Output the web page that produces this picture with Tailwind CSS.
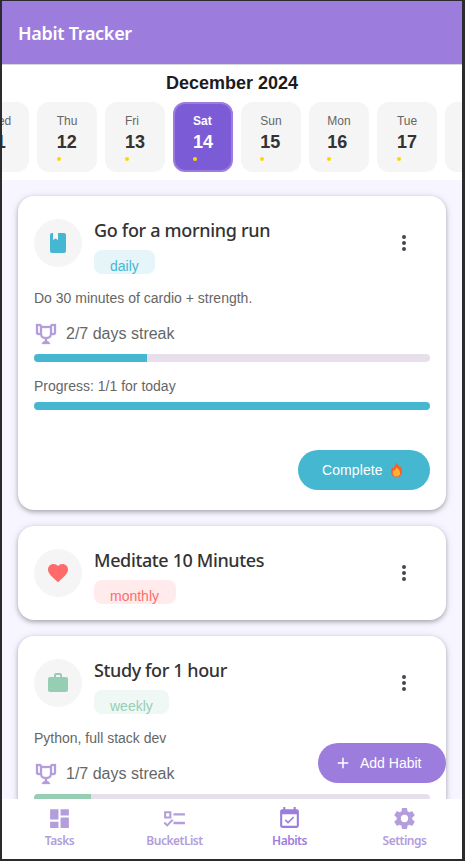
<!DOCTYPE html>
<html lang="en">
<head>
<meta charset="utf-8">
<title>Habit Tracker</title>
<script src="https://cdn.jsdelivr.net/npm/@tailwindcss/browser@4"></script>
</head>
<body class="h-[861px] w-[465px] overflow-hidden bg-[#2b2b2d] pt-px pr-[3px] pb-[2px] pl-[2px] font-['Liberation_Sans',Arial,sans-serif]">
<div class="relative flex h-[858px] w-[460px] flex-col overflow-hidden bg-[#f7f5ff]">
  <header class="flex h-16 shrink-0 items-center border-b border-[#d8d8d8] bg-[#9c7ddd] pt-0.5 pl-4">
    <h1 class="font-['Noto_Sans','Open_Sans',sans-serif] text-[18px] font-semibold tracking-[-0.3px] text-white">Habit Tracker</h1>
  </header>

  <section class="h-[115px] shrink-0 overflow-hidden bg-white">
    <h2 class="mt-[7px] h-[22px] text-center text-[18px] leading-[22px] font-bold text-[#1c1b1f]">December 2024</h2>
    <div class="-ml-[33px] mt-2 flex w-max gap-2">
      <div class="flex h-[70px] w-[60px] justify-center rounded-[12px] bg-[#f5f5f5]"><div class="pt-[11px]"><div class="text-[12px] leading-4 text-[#666]">Wed</div><div class="mt-[3px] text-[18px] leading-5 font-bold text-[#333]">11</div><div class="mt-[5px] size-1 rounded-full bg-[#ffd700]"></div></div></div>
      <div class="flex h-[70px] w-[60px] justify-center rounded-[12px] bg-[#f5f5f5]"><div class="pt-[11px]"><div class="text-[12px] leading-4 text-[#666]">Thu</div><div class="mt-[3px] text-[18px] leading-5 font-bold text-[#333]">12</div><div class="mt-[5px] size-1 rounded-full bg-[#ffd700]"></div></div></div>
      <div class="flex h-[70px] w-[60px] justify-center rounded-[12px] bg-[#f5f5f5]"><div class="pt-[11px]"><div class="text-[12px] leading-4 text-[#666]">Fri</div><div class="mt-[3px] text-[18px] leading-5 font-bold text-[#333]">13</div><div class="mt-[5px] size-1 rounded-full bg-[#ffd700]"></div></div></div>
      <div class="flex h-[70px] w-[60px] justify-center rounded-[12px] border-2 border-[#9c7ddd] bg-[#7b5cd6]"><div class="pt-[9px]"><div class="text-[12px] leading-4 font-bold text-white">Sat</div><div class="mt-[3px] text-[18px] leading-5 font-bold text-white">14</div><div class="mt-[5px] size-1 rounded-full bg-[#ffd700]"></div></div></div>
      <div class="flex h-[70px] w-[60px] justify-center rounded-[12px] bg-[#f5f5f5]"><div class="pt-[11px]"><div class="text-[12px] leading-4 text-[#666]">Sun</div><div class="mt-[3px] text-[18px] leading-5 font-bold text-[#333]">15</div><div class="mt-[5px] size-1 rounded-full bg-[#ffd700]"></div></div></div>
      <div class="flex h-[70px] w-[60px] justify-center rounded-[12px] bg-[#f5f5f5]"><div class="pt-[11px]"><div class="text-[12px] leading-4 text-[#666]">Mon</div><div class="mt-[3px] text-[18px] leading-5 font-bold text-[#333]">16</div><div class="mt-[5px] size-1 rounded-full bg-[#ffd700]"></div></div></div>
      <div class="flex h-[70px] w-[60px] justify-center rounded-[12px] bg-[#f5f5f5]"><div class="pt-[11px]"><div class="text-[12px] leading-4 text-[#666]">Tue</div><div class="mt-[3px] text-[18px] leading-5 font-bold text-[#333]">17</div><div class="mt-[5px] size-1 rounded-full bg-[#ffd700]"></div></div></div>
      <div class="h-[70px] w-[60px] rounded-[12px] bg-[#f5f5f5]"></div>
    </div>
  </section>

  <main class="flex min-h-0 flex-1 flex-col gap-4 overflow-hidden px-4 pt-4">
    <article class="h-[314px] shrink-0 rounded-[16px] bg-white px-4 pt-[22px] shadow-[0_2px_4px_rgba(0,0,0,0.25),0_1px_8px_rgba(0,0,0,0.12)]">
      <div class="flex h-[56px]">
        <div class="mt-px flex size-12 items-center justify-center rounded-full bg-[#f5f5f5]"><svg class="size-6" viewBox="0 0 24 24" fill="#45b7d1"><path d="M18,22A2,2 0 0,0 20,20V4C20,2.89 19.1,2 18,2H12V9L9.5,7.5L7,9V2H6A2,2 0 0,0 4,4V20A2,2 0 0,0 6,22H18Z"/></svg></div>
        <div class="ml-3 flex-1">
          <h3 class="h-6 font-['Noto_Sans','Open_Sans',sans-serif] text-[18px] leading-6 font-medium tracking-[-0.32px] text-[#333]">Go for a morning run</h3>
          <div class="mt-2 inline-block h-6 overflow-hidden rounded-[8px] bg-[#e6f5f9] px-4 pt-1.5 text-[14px] leading-5 text-[#45b7d1]">daily</div>
        </div>
        <svg class="mt-[13px] mr-[14px] size-6" viewBox="0 0 24 24" fill="#49454f"><path d="M12,16A2,2 0 0,1 14,18A2,2 0 0,1 12,20A2,2 0 0,1 10,18A2,2 0 0,1 12,16M12,10A2,2 0 0,1 14,12A2,2 0 0,1 12,14A2,2 0 0,1 10,12A2,2 0 0,1 12,10M12,4A2,2 0 0,1 14,6A2,2 0 0,1 12,8A2,2 0 0,1 10,6A2,2 0 0,1 12,4Z"/></svg>
      </div>
      <p class="mt-[14px] text-[14px] leading-5 text-[#666]">Do 30 minutes of cardio + strength.</p>
      <div class="mt-[14px] flex h-6 items-center gap-2 text-[16px] leading-6 text-[#666]"><svg class="size-6" viewBox="0 0 24 24" fill="#b39ddb" stroke="#b39ddb" stroke-width="0.3"><path d="M18 2C17.1 2 16 3 16 4H8C8 3 6.9 2 6 2H2V11C2 12 3 13 4 13H6.2C6.6 15 7.9 16.7 11 17V19.08C8 19.54 8 22 8 22H16C16 22 16 19.54 13 19.08V17C16.1 16.7 17.4 15 17.8 13H20C21 13 22 12 22 11V2H18M6 11H4V4H6V11M16 11.5C16 13.43 15.42 15 12 15C8.59 15 8 13.43 8 11.5V6H16V11.5M20 11H18V4H20V11Z"/></svg><span>2/7 days streak</span></div>
      <div class="mt-2 h-2 overflow-hidden rounded-full bg-[#e7e0ec]"><div class="h-2 w-[113px] bg-[#45b7d1]"></div></div>
      <p class="mt-[14px] text-[14px] leading-5 text-[#666]">Progress: 1/1 for today</p>
      <div class="mt-[6px] h-2 rounded-full bg-[#45b7d1]"></div>
      <div class="mt-10 flex justify-end"><button class="flex h-10 w-[132px] items-center rounded-full bg-[#45b7d1] pl-6 text-[14px] tracking-[0.1px] text-white">Complete<svg class="ml-2 h-[14px] w-[11px]" viewBox="0 0 11 14"><path fill="#f4602b" d="M5.6 0C7.4 1.4 7.5 3 8.6 4L9.3 3.2C10.4 4.8 11 6.3 11 8.4C11 11.8 8.8 14 5.5 14S0 11.8 0 8.6C0 6.5.6 5.4 1.5 4.4L2.3 5.4C3.6 4 4 1.6 5.6 0Z"/><path fill="#ffb02e" d="M5.3 4.6C7.2 5.7 9.1 7.6 9.1 9.9C9.1 12 7.7 13.4 5.5 13.4S1.8 12 1.8 10C1.8 8.6 2.2 7.6 3 6.8L3.8 7.5Z"/></svg></button></div>
    </article>

    <article class="h-[94px] shrink-0 rounded-[16px] bg-white px-4 pt-[22px] shadow-[0_2px_4px_rgba(0,0,0,0.25),0_1px_8px_rgba(0,0,0,0.12)]">
      <div class="flex h-[56px]">
        <div class="mt-px flex size-12 items-center justify-center rounded-full bg-[#f5f5f5]"><svg class="size-6" viewBox="0 0 24 24" fill="#ff6b6b"><path d="M12,21.35L10.55,20.03C5.4,15.36 2,12.27 2,8.5C2,5.41 4.42,3 7.5,3C9.24,3 10.91,3.81 12,5.08C13.09,3.81 14.76,3 16.5,3C19.58,3 22,5.41 22,8.5C22,12.27 18.6,15.36 13.45,20.03L12,21.35Z"/></svg></div>
        <div class="ml-3 flex-1">
          <h3 class="h-6 font-['Noto_Sans','Open_Sans',sans-serif] text-[18px] leading-6 font-medium tracking-[-0.37px] text-[#333]">Meditate 10 Minutes</h3>
          <div class="mt-2 inline-block h-6 min-w-[82px] overflow-hidden rounded-[8px] bg-[#ffebeb] px-4 pt-1.5 text-[14px] leading-5 text-[#ff6b6b]">monthly</div>
        </div>
        <svg class="mt-[13px] mr-[14px] size-6" viewBox="0 0 24 24" fill="#49454f"><path d="M12,16A2,2 0 0,1 14,18A2,2 0 0,1 12,20A2,2 0 0,1 10,18A2,2 0 0,1 12,16M12,10A2,2 0 0,1 14,12A2,2 0 0,1 12,14A2,2 0 0,1 10,12A2,2 0 0,1 12,10M12,4A2,2 0 0,1 14,6A2,2 0 0,1 12,8A2,2 0 0,1 10,6A2,2 0 0,1 12,4Z"/></svg>
      </div>
    </article>

    <article class="h-[314px] shrink-0 rounded-[16px] bg-white px-4 pt-[22px] shadow-[0_2px_4px_rgba(0,0,0,0.25),0_1px_8px_rgba(0,0,0,0.12)]">
      <div class="flex h-[56px]">
        <div class="mt-px flex size-12 items-center justify-center rounded-full bg-[#f5f5f5]"><svg class="size-6" viewBox="0 0 24 24" fill="#96ceb4"><path d="M10,2H14A2,2 0 0,1 16,4V6H20A2,2 0 0,1 22,8V19A2,2 0 0,1 20,21H4C2.89,21 2,20.1 2,19V8C2,6.89 2.89,6 4,6H8V4C8,2.89 8.89,2 10,2M14,6V4H10V6H14Z"/></svg></div>
        <div class="ml-3 flex-1">
          <h3 class="h-6 font-['Noto_Sans','Open_Sans',sans-serif] text-[18px] leading-6 font-medium tracking-[-0.4px] text-[#333]">Study for 1 hour</h3>
          <div class="mt-2 inline-block h-6 overflow-hidden rounded-[8px] bg-[#eff8f4] px-4 pt-1.5 text-[14px] leading-5 text-[#96ceb4]">weekly</div>
        </div>
        <svg class="mt-[13px] mr-[14px] size-6" viewBox="0 0 24 24" fill="#49454f"><path d="M12,16A2,2 0 0,1 14,18A2,2 0 0,1 12,20A2,2 0 0,1 10,18A2,2 0 0,1 12,16M12,10A2,2 0 0,1 14,12A2,2 0 0,1 12,14A2,2 0 0,1 10,12A2,2 0 0,1 12,10M12,4A2,2 0 0,1 14,6A2,2 0 0,1 12,8A2,2 0 0,1 10,6A2,2 0 0,1 12,4Z"/></svg>
      </div>
      <p class="mt-[14px] text-[14px] leading-5 text-[#666]">Python, full stack dev</p>
      <div class="mt-[14px] flex h-6 items-center gap-2 text-[16px] leading-6 text-[#666]"><svg class="size-6" viewBox="0 0 24 24" fill="#b39ddb" stroke="#b39ddb" stroke-width="0.3"><path d="M18 2C17.1 2 16 3 16 4H8C8 3 6.9 2 6 2H2V11C2 12 3 13 4 13H6.2C6.6 15 7.9 16.7 11 17V19.08C8 19.54 8 22 8 22H16C16 22 16 19.54 13 19.08V17C16.1 16.7 17.4 15 17.8 13H20C21 13 22 12 22 11V2H18M6 11H4V4H6V11M16 11.5C16 13.43 15.42 15 12 15C8.59 15 8 13.43 8 11.5V6H16V11.5M20 11H18V4H20V11Z"/></svg><span>1/7 days streak</span></div>
      <div class="mt-2 h-2 overflow-hidden rounded-full bg-[#e7e0ec]"><div class="h-2 w-[56.5px] bg-[#96ceb4]"></div></div>
    </article>
  </main>

  <button class="absolute right-4 bottom-[76px] flex h-10 w-32 items-center rounded-full bg-[#9c7ddd] pl-4 text-[14px] text-white"><svg class="mr-2 size-[18px]" viewBox="0 0 24 24" fill="#fff"><path d="M19,13H13V19H11V13H5V11H11V5H13V11H19V13Z"/></svg><span>Add Habit</span></button>

  <nav class="grid h-[60px] shrink-0 grid-cols-4 bg-white font-['Noto_Sans','Open_Sans',sans-serif] text-[12px] leading-4 font-semibold tracking-[-0.5px] text-[#b39ddb]">
    <div class="flex flex-col items-center pt-[7px]"><svg class="size-[25px]" viewBox="0 0 24 24" fill="currentColor"><path d="M13,3V9H21V3M13,21H21V11H13M3,21H11V15H3M3,13H11V3H3V13Z"/></svg><span class="mt-0.5">Tasks</span></div>
    <div class="flex flex-col items-center pt-[7px]"><svg class="size-[25px]" viewBox="0 0 24 24" fill="currentColor"><path d="M2,5H9V12H2V5M4,7V10H7V7H4M11,7H22V9.2H11V7M11,15.2H22V17.4H11V15.2M5,20L1.5,16.5L2.91,15.09L5,17.17L9.59,12.59L11,14L5,20Z"/></svg><span class="mt-0.5">BucketList</span></div>
    <div class="flex flex-col items-center pt-[7px] text-[#9c7ddd]"><svg class="size-[25px]" viewBox="0 0 24 24" fill="currentColor"><path d="M19,19H5V8H19M19,3H18V1H16V3H8V1H6V3H5C3.89,3 3,3.9 3,5V19A2,2 0 0,0 5,21H19A2,2 0 0,0 21,19V5C21,3.89 20.1,3 19,3M16.53,11.06L15.47,10L10.59,14.88L8.47,12.76L7.41,13.82L10.59,17L16.53,11.06Z"/></svg><span class="mt-0.5">Habits</span></div>
    <div class="flex flex-col items-center pt-[7px]"><svg class="size-[25px]" viewBox="0 0 24 24" fill="currentColor"><path d="M12,15.5A3.5,3.5 0 0,1 8.5,12A3.5,3.5 0 0,1 12,8.5A3.5,3.5 0 0,1 15.5,12A3.5,3.5 0 0,1 12,15.5M19.43,12.97C19.47,12.65 19.5,12.33 19.5,12C19.5,11.67 19.47,11.34 19.43,11L21.54,9.37C21.73,9.22 21.78,8.95 21.66,8.73L19.66,5.27C19.54,5.05 19.27,4.96 19.05,5.05L16.56,6.05C16.04,5.66 15.5,5.32 14.87,5.07L14.5,2.42C14.46,2.18 14.25,2 14,2H10C9.75,2 9.54,2.18 9.5,2.42L9.13,5.07C8.5,5.32 7.96,5.66 7.44,6.05L4.95,5.05C4.73,4.96 4.46,5.05 4.34,5.27L2.34,8.73C2.21,8.95 2.27,9.22 2.46,9.37L4.57,11C4.53,11.34 4.5,11.67 4.5,12C4.5,12.33 4.53,12.65 4.57,12.97L2.46,14.63C2.27,14.78 2.21,15.05 2.34,15.27L4.34,18.73C4.46,18.95 4.73,19.03 4.95,18.95L7.44,17.94C7.96,18.34 8.5,18.68 9.13,18.93L9.5,21.58C9.54,21.82 9.75,22 10,22H14C14.25,22 14.46,21.82 14.5,21.58L14.87,18.93C15.5,18.67 16.04,18.34 16.56,17.94L19.05,18.95C19.27,19.03 19.54,18.95 19.66,18.73L21.66,15.27C21.78,15.05 21.73,14.78 21.54,14.63L19.43,12.97Z"/></svg><span class="mt-0.5">Settings</span></div>
  </nav>
</div>
</body>
</html>
